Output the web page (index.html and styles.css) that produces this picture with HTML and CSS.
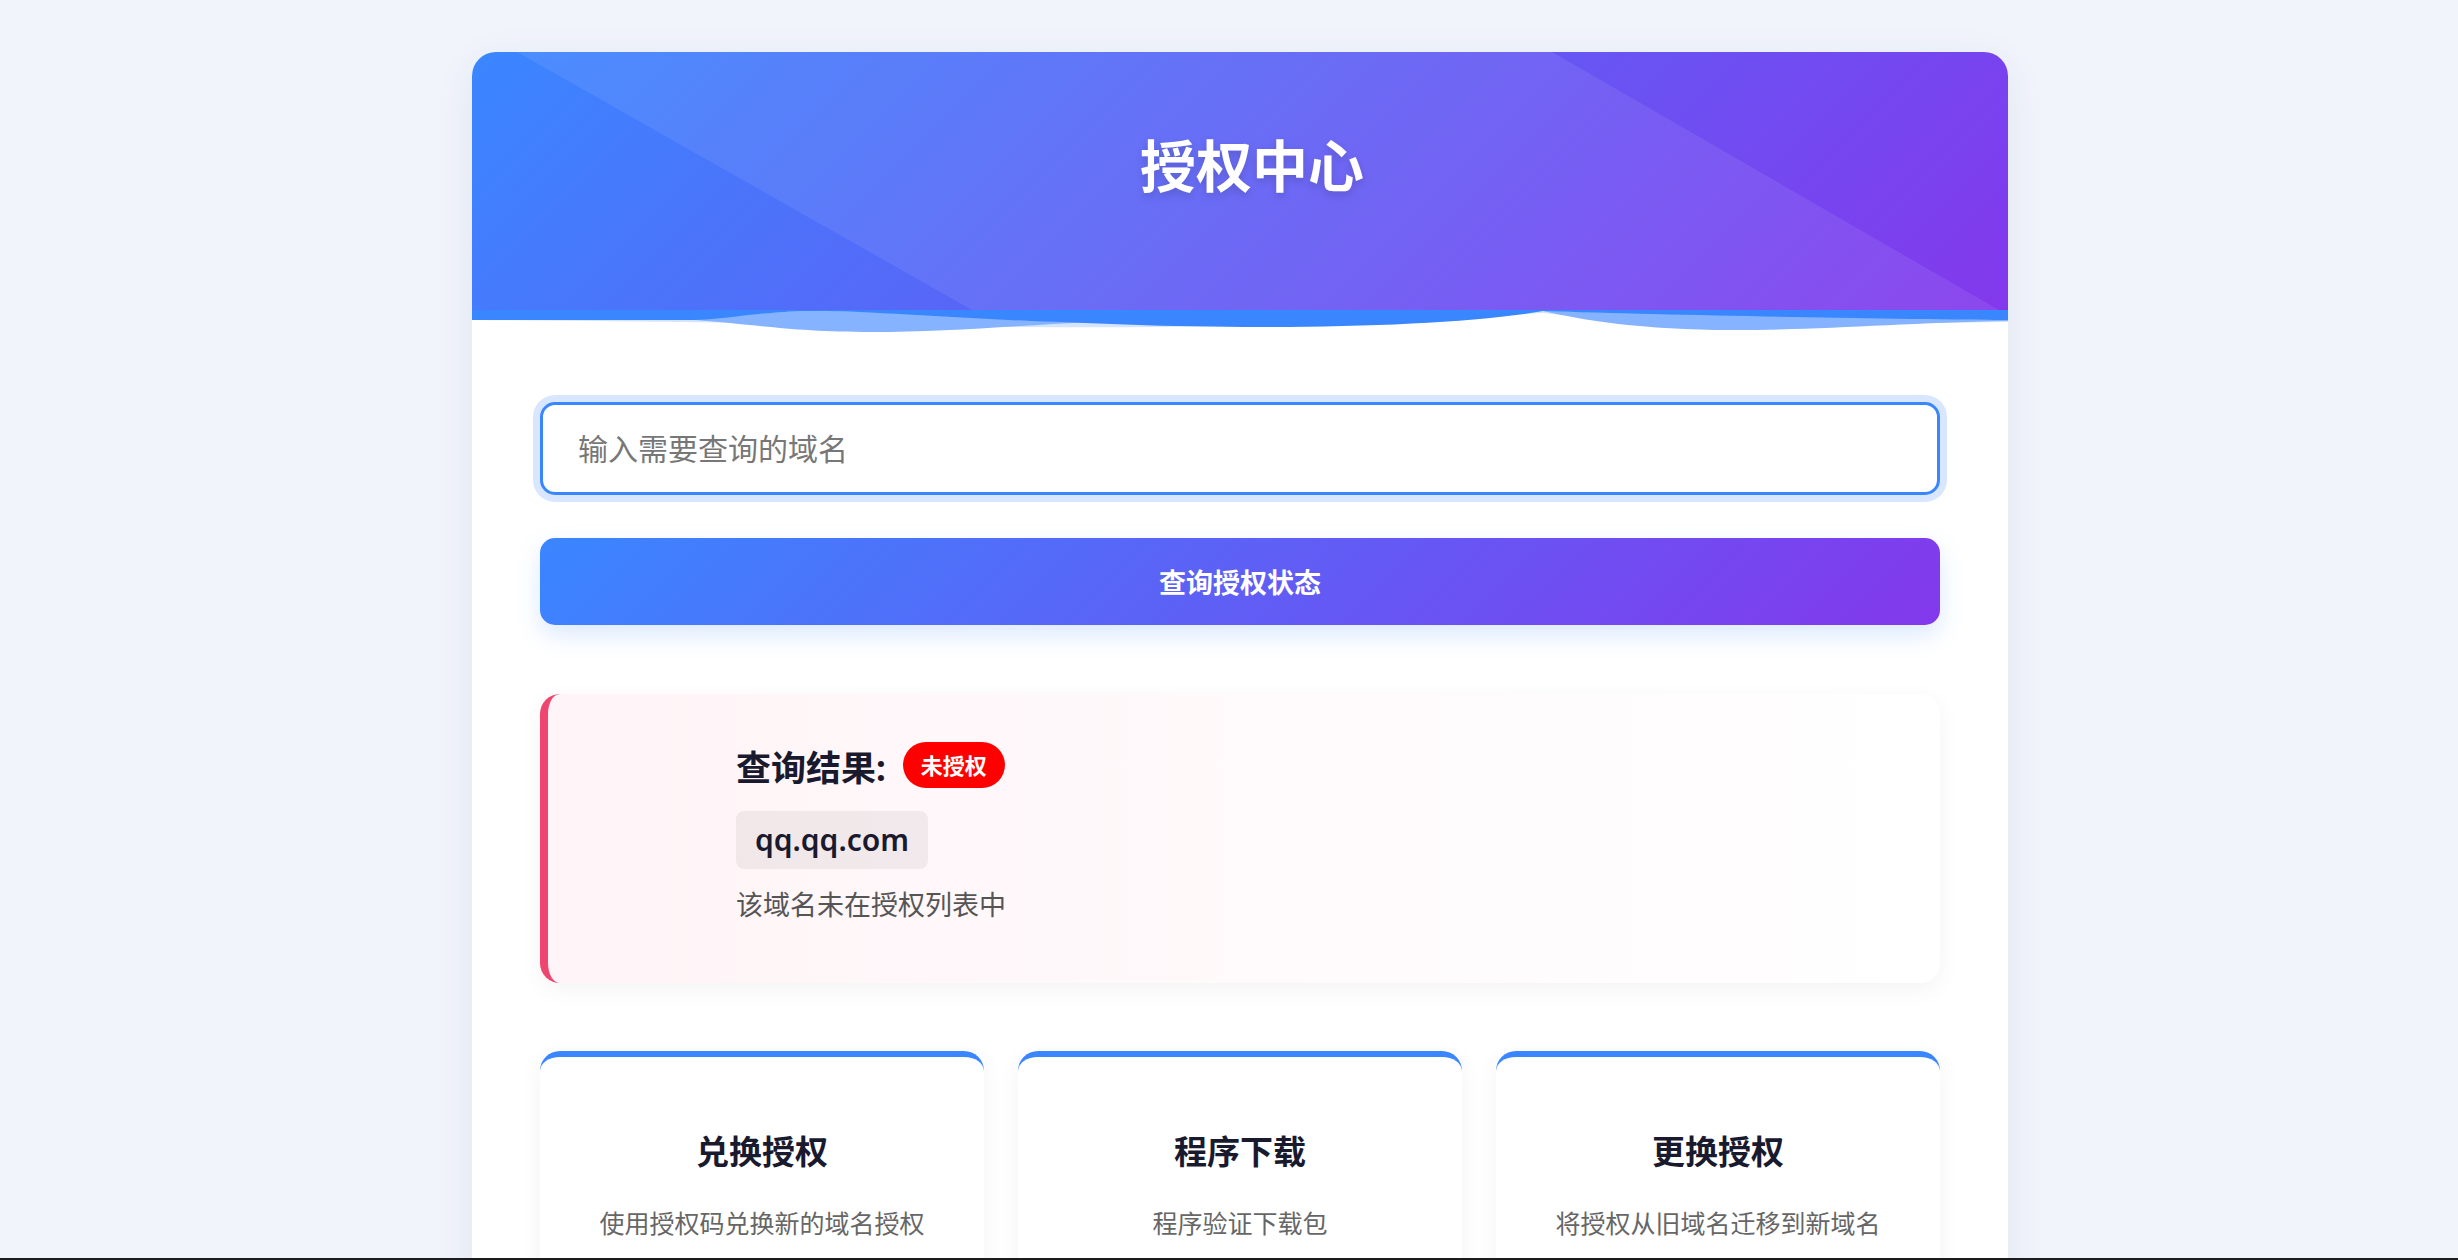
FILE: index.html
```html
<!DOCTYPE html>
<html lang="zh-CN">
<head>
    <meta charset="UTF-8">
    <meta name="viewport" content="width=device-width, initial-scale=1.0">
    <title>授权中心</title>
    <link rel="stylesheet" href="styles.css">
</head>
<body>
    <div class="wrap">
        <header class="top">
            <h1>授权中心</h1>
        </header>
        <svg class="wave" viewBox="0 0 1536 26" preserveAspectRatio="none">
            <path fill="#d6e5ff" d="M0,10 C150,11 300,13 460,16 C650,19 850,17 1071,3 C1200,15 1380,14 1536,12 L1536,0 L0,0 Z"/>
            <path fill="#86b3ff" d="M223,10 C270,5 310,1 345,1 C450,1 520,8 620,12 C540,16 470,22 400,22 C320,22 280,14 223,10 Z"/>
            <path fill="#86b3ff" d="M1071,1 C1110,10 1170,20 1260,20 C1350,20 1430,13 1536,11 L1536,10 Z"/>
            <path fill="#3a86ff" d="M0,0 H1536 V10 C1400,9 1200,5 1071,1 C1010,12 900,17 790,17 C690,17 620,13 560,11 C480,8 400,1 345,1 C290,1 250,10 223,10 H0 Z"/>
        </svg>
        <main class="content">
            <form class="search" onsubmit="event.preventDefault()">
                <input type="text" class="domain-input" placeholder="输入需要查询的域名" autofocus>
                <button type="submit" class="btn">查询授权状态</button>
            </form>

            <div class="result">
                <div class="result-head">
                    <span class="result-title">查询结果:</span>
                    <span class="badge">未授权</span>
                </div>
                <div class="domain">qq.qq.com</div>
                <p class="result-msg">该域名未在授权列表中</p>
            </div>

            <div class="tools">
                <div class="tool">
                    <h3>兑换授权</h3>
                    <p>使用授权码兑换新的域名授权</p>
                </div>
                <div class="tool">
                    <h3>程序下载</h3>
                    <p>程序验证下载包</p>
                </div>
                <div class="tool">
                    <h3>更换授权</h3>
                    <p>将授权从旧域名迁移到新域名</p>
                </div>
            </div>
        </main>
    </div>
</body>
</html>
```

FILE: styles.css
```css
html, body
{
    margin:0;
    padding:0;
}
body
{
    background-color:#f1f4fb;
    font-family:"Noto Sans","Noto Sans CJK SC",sans-serif;
    color:#1a1a2e;
    height:1260px;
    overflow:hidden;
}
body::after
{
    content:"";
    position:fixed;
    left:0;
    right:0;
    bottom:0;
    height:2px;
    background:#1c1c1c;
}
.wrap
{
    width:1536px;
    margin:52px 0 0 472px;
    background:#fff;
    border-radius:24px;
    box-shadow:0 10px 40px rgba(40,60,120,0.08);
    overflow:hidden;
}
.top
{
    position:relative;
    height:258px;
    background:linear-gradient(135deg,#3a86ff,#8338ec);
    text-align:center;
}
.top::before
{
    content:"";
    position:absolute;
    inset:0;
    background:rgba(255,255,255,0.08);
    clip-path:polygon(45px 0,1080px 0,1527px 258px,500px 258px);
}
.top h1
{
    position:relative;
    margin:0;
    padding:77px 0 0 24px;
    font-size:56px;
    line-height:73px;
    font-weight:700;
    color:#fff;
    text-shadow:0 4px 8px rgba(0,0,0,0.15);
}
.wave
{
    display:block;
    width:1536px;
    height:26px;
}
.content
{
    padding:66px 68px 80px;
}
.search
{
    margin:0;
}
.domain-input
{
    display:block;
    box-sizing:border-box;
    width:100%;
    height:93px;
    padding:0 35px;
    border:3px solid #3a86ff;
    border-radius:15px;
    box-shadow:0 0 0 7px rgba(58,134,255,0.2);
    font-family:inherit;
    font-size:30px;
    color:#333;
    outline:none;
    background:#fff;
}
.domain-input::placeholder
{
    color:#777;
}
.btn
{
    display:block;
    width:100%;
    height:87px;
    margin-top:43px;
    border:none;
    border-radius:15px;
    background:linear-gradient(135deg,#3a86ff,#8338ec);
    color:#fff;
    font-family:inherit;
    font-size:27px;
    font-weight:700;
    box-shadow:0 10px 25px rgba(58,134,255,0.18);
    cursor:pointer;
}
.result
{
    margin-top:69px;
    padding:48px 40px 58px 188px;
    border-left:8px solid #ef4670;
    border-radius:20px;
    background:linear-gradient(90deg,#fff4f7,#ffffff);
    box-shadow:0 6px 24px rgba(0,0,0,0.05);
}
.result-head
{
    display:flex;
    align-items:center;
    gap:17px;
    height:46px;
}
.result-title
{
    font-size:35px;
    font-weight:700;
}
.badge
{
    height:46px;
    line-height:46px;
    padding:0 18px;
    border-radius:23px;
    background:#ff0000;
    color:#fff;
    font-size:22px;
    font-weight:700;
}
.domain
{
    display:inline-block;
    margin-top:23px;
    height:58px;
    line-height:58px;
    padding:0 19px;
    border-radius:8px;
    background:rgba(0,0,0,0.055);
    font-size:30px;
    font-weight:600;
}
.result-msg
{
    margin:16px 0 0;
    font-size:27px;
    line-height:40px;
    color:#555;
}
.tools
{
    display:grid;
    grid-template-columns:repeat(3,1fr);
    gap:34px;
    margin-top:68px;
}
.tool
{
    height:300px;
    padding:70px 20px 0;
    border-top:6px solid #3a86ff;
    border-radius:20px;
    background:#fff;
    box-shadow:0 6px 24px rgba(0,0,0,0.05);
    text-align:center;
}
.tool h3
{
    margin:0;
    font-size:33px;
    line-height:50px;
    font-weight:700;
}
.tool p
{
    margin:28px 0 0;
    font-size:25px;
    line-height:37px;
    color:#666;
}
```
